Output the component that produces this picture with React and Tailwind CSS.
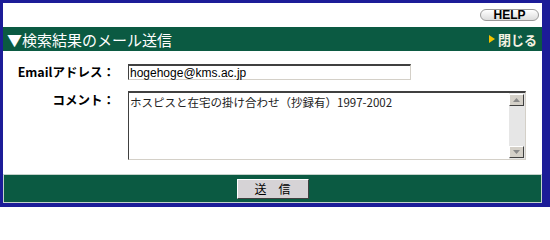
import React from 'react';

const jp = { fontFamily: '"Noto Sans CJK JP", "Noto Sans", sans-serif' };
const ui = { fontFamily: '"Liberation Sans", "Noto Sans CJK JP", sans-serif' };

const ArrowBox = ({ down }) => (
  <div className="flex h-[12px] w-[15px] items-center justify-center border border-t-white border-l-white border-r-[#404040] border-b-[#404040] bg-[#d4d0c8]">
    <svg width="7" height="4" viewBox="0 0 7 4" aria-hidden>
      <path d={down ? 'M0 0 L7 0 L3.5 4 Z' : 'M0 4 L7 4 L3.5 0 Z'} fill="#8a8a8a" />
    </svg>
  </div>
);

export default function App() {
  return (
    <div
      className="flex h-[207px] w-[550px] flex-col border-solid border-t-[3px] border-l-[3px] border-r-[8px] border-b-[4px] border-[#1c1c98] bg-white"
      style={jp}
    >
      <div className="flex h-[24px] items-center justify-end pr-[3px]">
        <div
          className="flex h-[12px] w-[59px] items-center justify-center rounded-full border border-[#9a9a9a] bg-gradient-to-b from-white to-[#dcdcdc] text-[12px] font-bold leading-none text-black"
          style={ui}
        >
          HELP
        </div>
      </div>

      <div className="flex h-[24px] items-center justify-between bg-[#0b5a42] pl-[4px] pr-[5px]">
        <span className="text-[15px] leading-none text-white">▼検索結果のメール送信</span>
        <span className="flex items-center gap-[3px]">
          <svg width="6" height="8" viewBox="0 0 6 8" aria-hidden>
            <path d="M0 0 L6 4 L0 8 Z" fill="#f2c200" />
          </svg>
          <span className="text-[13px] font-bold leading-none text-[#f4f1e2]">閉じる</span>
        </span>
      </div>

      <div className="flex flex-1 flex-col gap-[11px] pt-[13px]">
        <div className="flex items-center">
          <div className="w-[112px] text-right text-[12.5px] font-bold leading-none text-black">Emailアドレス：</div>
          <div
            className="ml-[13px] flex h-[16px] w-[283px] items-center border border-t-2 border-t-[#404040] border-l-[#404040] border-r-[#d4d0c8] border-b-[#d4d0c8] pl-[1px] text-[12px] leading-none text-black"
            style={ui}
          >
            hogehoge@kms.ac.jp
          </div>
        </div>

        <div className="flex items-start">
          <div className="w-[112px] pt-[3px] text-right text-[12.5px] font-bold leading-none text-black">コメント：</div>
          <div className="ml-[13px] flex h-[69px] w-[398px] border border-t-2 border-t-[#404040] border-l-[#404040] border-r-[#d4d0c8] border-b-[#d4d0c8]">
            <div className="flex-1 pl-[1px] pt-[2px] text-[11.5px] leading-tight text-[#222]">
              ホスピスと在宅の掛け合わせ（抄録有）1997-2002
            </div>
            <div className="flex w-[16px] flex-col justify-between bg-[#e6e6e6] py-[1px]">
              <ArrowBox />
              <ArrowBox down />
            </div>
          </div>
        </div>
      </div>

      <div className="flex h-[29px] items-center justify-center border border-[#c4d2cb] bg-[#0b5a42]">
        <div className="flex h-[20px] w-[72px] items-center justify-center border border-t-white border-l-white border-r-[#404040] border-b-[#404040] bg-[#d6d3d6] text-[12px] leading-none text-black">
          送　信
        </div>
      </div>
    </div>
  );
}
